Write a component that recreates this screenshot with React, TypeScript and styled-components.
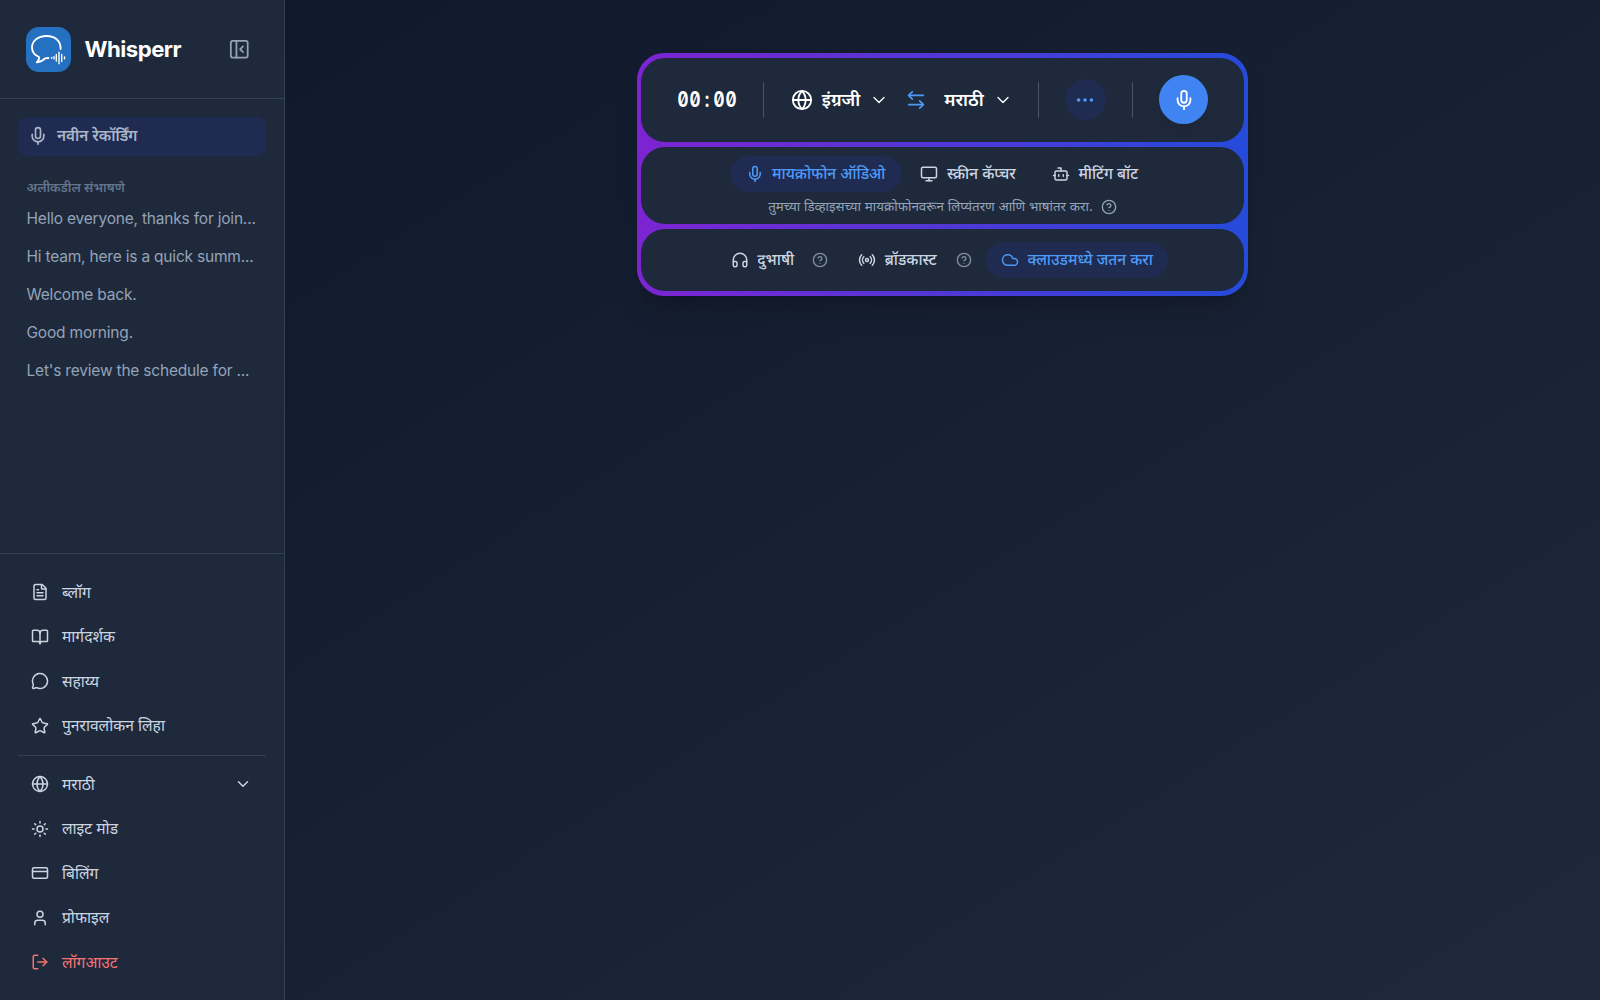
import React from 'react';
import styled, { createGlobalStyle, css } from 'styled-components';
import {
  Mic, FileText, BookOpen, MessageCircle, Star, Globe, Sun, CreditCard, User, LogOut,
  ChevronDown, ArrowLeftRight, Ellipsis, Monitor, Bot, CircleHelp, Headphones, Radio, Cloud,
} from 'lucide-react';

const GlobalStyle = createGlobalStyle`
  * { box-sizing: border-box; }
  body {
    margin: 0;
    background: #101729;
    font-family: Inter, "Noto Sans Devanagari", "Noto Sans", sans-serif;
    color: #cbd5e1;
  }
  button { font: inherit; color: inherit; background: none; border: 0; padding: 0; }
`;

const Page = styled.div`
  display: flex;
  height: 1000px;
  background: linear-gradient(to bottom right, #0f172a, #1e293b);
`;

const Sidebar = styled.aside`
  width: 285px;
  flex: none;
  display: flex;
  flex-direction: column;
  background: #1e293b;
  border-right: 1.5px solid #334155;
`;

const Brand = styled.header`
  height: 99px;
  display: flex;
  align-items: center;
  padding: 0 34px 0 26.4px;
  border-bottom: 1px solid #334155;
`;

const LogoTile = styled.div`
  width: 45px;
  height: 45px;
  border-radius: 13px;
  background: #2570c0;
  overflow: hidden;
`;

const BrandName = styled.h1`
  margin: 0 auto 0 13px;
  font-size: 22.2px;
  line-height: 30px;
  font-weight: 700;
  letter-spacing: -0.5px;
  color: #fff;
`;

const Recents = styled.section`
  flex: 1;
  padding: 17.5px 18px 0;
`;

const NewRecording = styled.button`
  width: 247.5px;
  height: 39.5px;
  display: flex;
  align-items: center;
  gap: 9.5px;
  padding-left: 9.5px;
  border-radius: 9px;
  background: #1f2b50;
  color: #a9b6ca;
  font-size: 15.3px;
  font-weight: 600;
`;

const RecentsTitle = styled.h2`
  margin: 22px 0 4px 8.5px;
  font-size: 13px;
  line-height: 18px;
  font-weight: 600;
  color: #64748b;
`;

const Conversation = styled.div`
  height: 37.8px;
  display: flex;
  align-items: center;
  padding-left: 8.5px;
  font-size: 15.5px;
  letter-spacing: -0.2px;
  white-space: nowrap;
  color: #94a3b8;
`;

const Menu = styled.nav`
  height: 447px;
  border-top: 1.5px solid #334155;
  padding: 16px 18px 0;
`;

const Label = styled.span`
  padding-top: 2px;
`;

const MenuItem = styled.button<{ $danger?: boolean }>`
  width: 100%;
  height: 44.5px;
  display: flex;
  align-items: center;
  gap: 13px;
  padding: 0 14px 0 13px;
  font-size: 15.6px;
  font-weight: 450;
  color: ${p => (p.$danger ? '#f87171' : '#cbd5e1')};
  svg:last-child:not(:first-child) { margin-left: auto; }
`;

const Rule = styled.hr`
  height: 1px;
  margin: 7px 0 6px;
  border: 0;
  background: #334155;
`;

const Main = styled.main`
  flex: 1;
  display: flex;
  justify-content: center;
  align-items: flex-start;
  padding-top: 53.4px;
`;

const Panel = styled.section`
  width: 611px;
  height: 242.2px;
  display: flex;
  flex-direction: column;
  gap: 4.4px;
  padding: 4.4px;
  border-radius: 27px;
  background: linear-gradient(to right, #7d24d2, #254bda);
  box-shadow: 0 22px 28px -6px rgba(0, 0, 0, 0.14), 0 9px 11px -7px rgba(0, 0, 0, 0.1);
`;

const Bar = styled.div<{ $height: number; $shift?: number }>`
  height: ${p => p.$height}px;
  flex: none;
  display: flex;
  align-items: center;
  justify-content: center;
  padding-right: ${p => p.$shift ?? 0}px;
  border-radius: 24px;
  background: #1e293b;
`;

const Timer = styled.span`
  width: 60px;
  display: grid;
  grid-template-columns: repeat(5, 12px);
  justify-content: center;
  font-size: 21.3px;
  line-height: 28px;
  padding-bottom: 1px;
  font-weight: 700;
  font-feature-settings: "zero", "tnum";
  color: #fff;
`;

const Digit = styled.span`
  display: flex;
  justify-content: center;
  transform: scaleX(0.8);
`;

const Divider = styled.i<{ $left: number; $right: number }>`
  width: 1px;
  height: 36px;
  margin: 0 ${p => p.$right}px 0 ${p => p.$left}px;
  background: #475569;
`;

const Language = styled.button`
  display: flex;
  align-items: center;
  gap: 9px;
  font-size: 17.8px;
  font-weight: 600;
  color: #fff;
`;

const Swap = styled.button`
  display: flex;
  margin: 0 17px 0 16px;
  color: #4c9bf8;
`;

const RoundButton = styled.button<{ $size: number; $primary?: boolean }>`
  width: ${p => p.$size}px;
  height: ${p => p.$size}px;
  flex: none;
  display: grid;
  place-items: center;
  border-radius: 50%;
  background: #1f2b50;
  color: #4c9bf8;
  ${p => p.$primary && css`
    background: #4084f4;
    color: #fff;
    box-shadow: 0 7px 10px rgba(0, 0, 0, 0.08);
  `}
`;

const Stack = styled.div`
  display: flex;
  flex-direction: column;
  align-items: center;
  padding-top: 2.5px;
`;

const Row = styled.div`
  display: flex;
  align-items: center;
`;

const Pill = styled.button<{ $active?: boolean; $width: number }>`
  width: ${p => p.$width}px;
  height: 36px;
  flex: none;
  display: flex;
  align-items: center;
  justify-content: center;
  gap: 8.5px;
  border-radius: 18px;
  font-size: 15.4px;
  font-weight: 530;
  white-space: nowrap;
  background: ${p => (p.$active ? '#1f2b50' : 'transparent')};
  color: ${p => (p.$active ? '#4c9bf8' : '#cbd5e1')};
`;

const Hint = styled.p`
  margin: 5.5px 0 0;
  height: 20px;
  display: flex;
  align-items: center;
  gap: 8px;
  font-size: 13.35px;
  color: #94a3b8;
  white-space: nowrap;
`;

const Help = styled(CircleHelp).attrs({ size: 16, strokeWidth: 2 })<{ $after?: number }>`
  color: #94a3b8;
  flex: none;
  margin-right: ${p => p.$after ?? 0}px;
  opacity: ${p => (p.$after ? 0.85 : 1)};
`;

const Logo = () => (
  <LogoTile>
    <svg width="45" height="45" viewBox="0 0 45 45" fill="none" stroke="#fff" strokeWidth="1.8" strokeLinecap="round" strokeLinejoin="round">
      <path d="M34.600 22 C35 14 29 9 20.500 9 C12 9 6 14 6 20.500 C6 25 8.500 28 13 30 C13.500 32 12.200 34 10.800 35.300 C14.500 35 17 33.500 19 31.300 L22.500 31" />
      <path d="M25.700 30.500v.8M28 29.700v2.200M30.300 27.500v6.500M33 25.200v11.500M35.700 27.500v7M38.500 30v1.800" strokeWidth="1.400" />
    </svg>
  </LogoTile>
);

const CollapseIcon = () => (
  <svg width="22.500" height="22.500" viewBox="0 0 24 24" fill="none" stroke="#94a3b8" strokeWidth="1.9" strokeLinecap="round" strokeLinejoin="round">
    <rect x="3" y="3" width="18" height="18" rx="2" />
    <path d="M9 3v18M16 15l-3-3 3-3" />
  </svg>
);

const conversations = [
  'Hello everyone, thanks for join...',
  'Hi team, here is a quick summ...',
  'Welcome back.',
  'Good morning.',
  "Let's review the schedule for ...",
];

export default function App() {
  return (
    <>
      <GlobalStyle />
      <Page>
        <Sidebar>
          <Brand>
            <Logo />
            <BrandName>Whisperr</BrandName>
            <CollapseIcon />
          </Brand>
          <Recents>
            <NewRecording><Mic size={20} /><span>नवीन रेकॉर्डिंग</span></NewRecording>
            <RecentsTitle>अलीकडील संभाषणे</RecentsTitle>
            {conversations.map(c => <Conversation key={c}>{c}</Conversation>)}
          </Recents>
          <Menu>
            <MenuItem><FileText size={18} /><Label>ब्लॉग</Label></MenuItem>
            <MenuItem><BookOpen size={18} /><Label>मार्गदर्शक</Label></MenuItem>
            <MenuItem><MessageCircle size={18} /><Label>सहाय्य</Label></MenuItem>
            <MenuItem><Star size={18} /><Label>पुनरावलोकन लिहा</Label></MenuItem>
            <Rule />
            <MenuItem><Globe size={18} /><Label>मराठी</Label><ChevronDown size={18} /></MenuItem>
            <MenuItem><Sun size={18} /><Label>लाइट मोड</Label></MenuItem>
            <MenuItem><CreditCard size={18} /><Label>बिलिंग</Label></MenuItem>
            <MenuItem><User size={18} /><Label>प्रोफाइल</Label></MenuItem>
            <MenuItem $danger><LogOut size={18} /><Label>लॉगआउट</Label></MenuItem>
          </Menu>
        </Sidebar>
        <Main>
          <Panel>
            <Bar $height={84.4}>
              <Timer>{'00:00'.split('').map((c, i) => <Digit key={i}>{c}</Digit>)}</Timer>
              <Divider $left={26} $right={27} />
              <Language><Globe size={22} /><Label>इंग्रजी</Label><ChevronDown size={20} strokeWidth={1.6} /></Language>
              <Swap><ArrowLeftRight size={22} strokeWidth={1.8} /></Swap>
              <Language><Label>मराठी</Label><ChevronDown size={20} strokeWidth={1.6} /></Language>
              <Divider $left={25} $right={26} />
              <RoundButton $size={41}><Ellipsis size={22} /></RoundButton>
              <Divider $left={26} $right={26.5} />
              <RoundButton $size={49} $primary><Mic size={22} /></RoundButton>
            </Bar>
            <Bar $height={77.8}>
              <Stack>
                <Row>
                  <Pill $active $width={172}><Mic size={18} /><Label>मायक्रोफोन ऑडिओ</Label></Pill>
                  <Pill $width={133}><Monitor size={18} /><Label>स्क्रीन कॅप्चर</Label></Pill>
                  <Pill $width={121}><Bot size={18} /><Label>मीटिंग बॉट</Label></Pill>
                </Row>
                <Hint><span>तुमच्या डिव्हाइसच्या मायक्रोफोनवरून लिप्यंतरण आणि भाषांतर करा.</span><Help /></Hint>
              </Stack>
            </Bar>
            <Bar $height={62.2} $shift={4}>
              <Pill $width={99}><Headphones size={18} /><Label>दुभाषी</Label></Pill>
              <Help $after={11} />
              <Pill $width={117}><Radio size={18} /><Label>ब्रॉडकास्ट</Label></Pill>
              <Help $after={14} />
              <Pill $active $width={182}><Cloud size={18} /><Label>क्लाउडमध्ये जतन करा</Label></Pill>
            </Bar>
          </Panel>
        </Main>
      </Page>
    </>
  );
}
